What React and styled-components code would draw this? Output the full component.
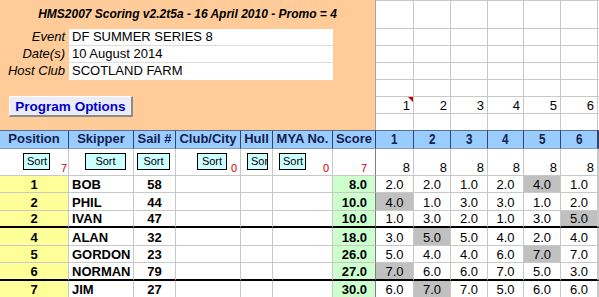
import React from 'react';
import styled, { createGlobalStyle, css } from 'styled-components';

const GlobalStyle = createGlobalStyle`
  html, body {
    margin: 0;
    padding: 0;
    background: #ffffff;
  }
  body {
    font-family: "Liberation Sans", Arial, sans-serif;
    font-size: 13px;
    color: #000;
    overflow: hidden;
  }
`;

const GRID = '#c8c8c8';
// column widths include the right gridline pixel
const COLS = [69, 65, 42, 65, 32, 60, 43, 38, 37, 37, 36, 37, 37, 1];
const ROWS = [29, 17, 17, 17, 17, 17, 16, 19, 27, 17, 18, 17, 18, 17, 18, 17];

const Sheet = styled.div`
  display: grid;
  grid-template-columns: ${COLS.map((w) => `${w}px`).join(' ')};
  grid-template-rows: ${ROWS.map((h) => `${h}px`).join(' ')};
  width: 599px;
  height: 297px;
  overflow: hidden;
`;

const Panel = styled.div`
  grid-column: 1 / 8;
  grid-row: 1 / 8;
  background: #ffcc99;
  border-right: 1px solid #a6a6a6;
  display: flex;
  flex-direction: column;
`;

const Title = styled.div`
  height: 29px;
  box-sizing: border-box;
  display: flex;
  align-items: flex-end;
  justify-content: center;
  padding-bottom: 8px;
  font-size: 12px;
  font-weight: bold;
  font-style: italic;
  line-height: 14px;
  white-space: nowrap;
`;

const InfoRow = styled.div`
  display: flex;
  height: 17px;
`;

const InfoLabel = styled.div`
  width: 69px;
  box-sizing: border-box;
  display: flex;
  align-items: flex-end;
  justify-content: flex-end;
  padding: 0 4px 2px 0;
  font-style: italic;
  line-height: 14px;
  white-space: nowrap;
`;

const InfoValue = styled.div`
  width: 264px;
  box-sizing: border-box;
  display: flex;
  align-items: flex-end;
  padding: 0 0 1px 3px;
  background: #ffffff;
  border-bottom: 1px solid ${(p) => (p.$last ? '#ffffff' : '#dcdcdc')};
  line-height: 14px;
  white-space: nowrap;
`;

const Spacer = styled.div`
  height: 16px;
`;

const OptionsButton = styled.div`
  margin-left: 9px;
  width: 124px;
  height: 21px;
  box-sizing: border-box;
  display: flex;
  align-items: center;
  justify-content: center;
  background: #ececf6;
  border-style: solid;
  border-width: 1px 2px 2px 1px;
  border-color: #ffffff #8c8c8c #8c8c8c #ffffff;
  color: #0000cc;
  font-size: 13.5px;
  font-weight: bold;
  white-space: nowrap;
`;

const TopCell = styled.div`
  box-sizing: border-box;
  position: relative;
  display: flex;
  align-items: flex-end;
  justify-content: flex-end;
  padding-right: 3px;
  border-right: 1px solid ${GRID};
  border-top: ${(p) => (p.$first ? `1px solid ${GRID}` : 'none')};
  border-bottom: ${(p) => (p.$last ? 'none' : `1px solid ${GRID}`)};
  line-height: 14px;
  overflow: hidden;

  ${(p) =>
    p.$note &&
    css`
      &::after {
        content: '';
        position: absolute;
        top: 0;
        right: 0;
        border-top: 5px solid #c00000;
        border-left: 5px solid transparent;
      }
    `}
`;

const HeaderCell = styled.div`
  box-sizing: border-box;
  display: flex;
  align-items: flex-end;
  justify-content: center;
  padding-bottom: 2px;
  background: #99ccff;
  border-top: 1px solid #5a6d8f;
  border-bottom: 1px solid #8a9ab8;
  border-right: 1px solid #34446a;
  color: #14214d;
  font-weight: bold;
  line-height: 14px;
  white-space: nowrap;
  overflow: hidden;
`;

// race numbers in the header are set in a narrow bold face
const Narrow = styled.span`
  display: inline-block;
  font-size: 15px;
  font-weight: bold;
  transform: scaleX(0.78);
`;

const SortCell = styled.div`
  box-sizing: border-box;
  display: flex;
  align-items: flex-start;
  border-right: 1px solid ${(p) => (p.$dark ? '#7f7f7f' : GRID)};
  border-bottom: 1px solid ${GRID};
  overflow: hidden;
`;

const SortButton = styled.div`
  flex-shrink: 0;
  margin: 4px 0 0 ${(p) => p.$x}px;
  width: ${(p) => p.$w}px;
  height: 17px;
  box-sizing: border-box;
  padding: 0 3px;
  border: 1px solid #000;
  background: #ccffff;
  font-size: 11px;
  line-height: 15px;
  text-align: center;
  white-space: nowrap;
  overflow: hidden;
`;

const Tally = styled.span`
  margin-left: auto;
  align-self: flex-end;
  padding: 0 ${(p) => p.$pr}px 1px 0;
  color: #cc0000;
  font-size: 11px;
  line-height: 12px;
`;

const RaceCount = styled.span`
  margin-left: auto;
  align-self: flex-end;
  padding-right: 3px;
  line-height: 14px;
`;

const DataCell = styled.div`
  box-sizing: border-box;
  display: flex;
  align-items: flex-end;
  justify-content: ${(p) => p.$align || 'center'};
  padding: 0 ${(p) => p.$pr || 0}px 0 ${(p) => p.$pl || 0}px;
  background: ${(p) => p.$bg || '#ffffff'};
  border-right: 1px solid ${(p) => (p.$dark ? '#7f7f7f' : GRID)};
  border-bottom: ${(p) => (p.$thick ? '2px solid #000' : `1px solid ${GRID}`)};
  font-weight: ${(p) => (p.$bold ? 'bold' : 'normal')};
  line-height: 14px;
  white-space: nowrap;
  overflow: hidden;
`;

const HEADERS = ['Position', 'Skipper', 'Sail #', 'Club/City', 'Hull', 'MYA No.', 'Score'];
const RACES = ['1', '2', '3', '4', '5', '6'];

const SORTS = [
  { btn: { x: 23, w: 27 }, tally: { n: 7, pr: 1 } },
  { btn: { x: 16, w: 41 } },
  { btn: { x: 3, w: 33 } },
  { btn: { x: 21, w: 30 }, tally: { n: 0, pr: 3 } },
  { btn: { x: 6, w: 21 } },
  { btn: { x: 6, w: 27 }, tally: { n: 0, pr: 3 } },
  { tally: { n: 7, pr: 8 }, dark: true },
];

const RESULTS = [
  { pos: 1, name: 'BOB', sail: 58, score: '8.0', races: ['2.0', '2.0', '1.0', '2.0', '4.0', '1.0'], drop: 4 },
  { pos: 2, name: 'PHIL', sail: 44, score: '10.0', races: ['4.0', '1.0', '3.0', '3.0', '1.0', '2.0'], drop: 0 },
  { pos: 2, name: 'IVAN', sail: 47, score: '10.0', races: ['1.0', '3.0', '2.0', '1.0', '3.0', '5.0'], drop: 5, thick: true },
  { pos: 4, name: 'ALAN', sail: 32, score: '18.0', races: ['3.0', '5.0', '5.0', '4.0', '2.0', '4.0'], drop: 1 },
  { pos: 5, name: 'GORDON', sail: 23, score: '26.0', races: ['5.0', '4.0', '4.0', '6.0', '7.0', '7.0'], drop: 4 },
  { pos: 6, name: 'NORMAN', sail: 79, score: '27.0', races: ['7.0', '6.0', '6.0', '7.0', '5.0', '3.0'], drop: 0, thick: true },
  { pos: 7, name: 'JIM', sail: 27, score: '30.0', races: ['6.0', '7.0', '7.0', '5.0', '6.0', '6.0'], drop: 1 },
];

function TopRight() {
  const cells = [];
  for (let r = 0; r < 7; r++) {
    for (let c = 0; c < 7; c++) {
      const label = r === 5 && c < 6 ? RACES[c] : null;
      cells.push(
        <TopCell key={`t${r}-${c}`} $first={r === 0} $last={r === 6} $note={r === 5 && c === 0}>
          {label}
        </TopCell>
      );
    }
  }
  return cells;
}

function ResultRow({ row }) {
  const t = row.thick;
  return (
    <>
      <DataCell $bg="#ffff99" $bold $thick={t}>{row.pos}</DataCell>
      <DataCell $align="flex-start" $pl={3} $bold $thick={t}>{row.name}</DataCell>
      <DataCell $bold $thick={t}>{row.sail}</DataCell>
      <DataCell $thick={t} />
      <DataCell $thick={t} />
      <DataCell $thick={t} />
      <DataCell $bg="#ccffcc" $align="flex-end" $pr={8} $bold $dark $thick={t}>{row.score}</DataCell>
      {row.races.map((v, i) => (
        <DataCell key={i} $bg={i === row.drop ? '#c0c0c0' : '#ffffff'} $thick={t}>{v}</DataCell>
      ))}
      <DataCell $thick={t} />
    </>
  );
}

export default function App() {
  return (
    <>
      <GlobalStyle />
      <Sheet>
        <Panel>
          <Title>HMS2007 Scoring v2.2t5a - 16 April 2010 - Promo = 4</Title>
          <InfoRow>
            <InfoLabel>Event</InfoLabel>
            <InfoValue>DF SUMMER SERIES 8</InfoValue>
          </InfoRow>
          <InfoRow>
            <InfoLabel>Date(s)</InfoLabel>
            <InfoValue>10 August 2014</InfoValue>
          </InfoRow>
          <InfoRow>
            <InfoLabel>Host Club</InfoLabel>
            <InfoValue $last>SCOTLAND FARM</InfoValue>
          </InfoRow>
          <Spacer />
          <OptionsButton>Program Options</OptionsButton>
        </Panel>
        <TopRight />

        {HEADERS.map((h) => (
          <HeaderCell key={h}>{h}</HeaderCell>
        ))}
        {RACES.map((r) => (
          <HeaderCell key={`r${r}`}>
            <Narrow>{r}</Narrow>
          </HeaderCell>
        ))}
        <HeaderCell />

        {SORTS.map((s, i) => (
          <SortCell key={`s${i}`} $dark={s.dark}>
            {s.btn && <SortButton $x={s.btn.x} $w={s.btn.w}>Sort</SortButton>}
            {s.tally && <Tally $pr={s.tally.pr}>{s.tally.n}</Tally>}
          </SortCell>
        ))}
        {RACES.map((r) => (
          <SortCell key={`c${r}`}>
            <RaceCount>8</RaceCount>
          </SortCell>
        ))}
        <SortCell />

        {RESULTS.map((row) => (
          <ResultRow key={row.name} row={row} />
        ))}
      </Sheet>
    </>
  );
}
